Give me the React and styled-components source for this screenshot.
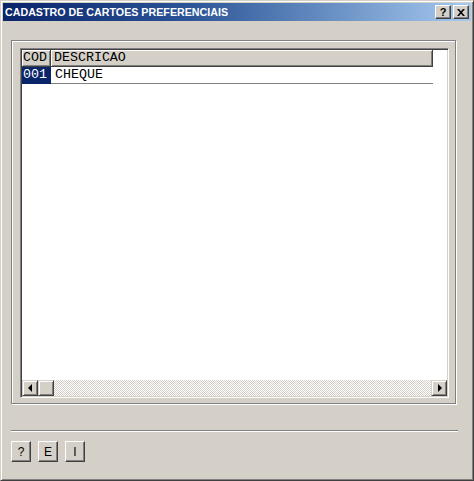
import React from 'react'
import styled, { createGlobalStyle } from 'styled-components'

const GlobalStyle = createGlobalStyle`
  html, body {
    margin: 0;
    padding: 0;
    background: #d4d0c8;
  }
  * {
    box-sizing: border-box;
  }
`

const App = () => {
  return (
    <>
      <GlobalStyle />
      <Window>
        <TitleBar>
          <Title>CADASTRO DE CARTOES PREFERENCIAIS</Title>
          <TitleButtons>
            <CaptionButton>?</CaptionButton>
            <CaptionButton>
              <svg width="8" height="7" viewBox="0 0 8 7">
                <path d="M0 0h2l2 2.2L6 0h2L5 3.5 8 7H6L4 4.8 2 7H0l3-3.5z" fill="#000" />
              </svg>
            </CaptionButton>
          </TitleButtons>
        </TitleBar>
        <Body>
          <GroupBox>
            <Grid>
              <GridRow>
                <HeaderCell width={29} pad={1}>COD</HeaderCell>
                <HeaderCell width={382} pad={3}>DESCRICAO</HeaderCell>
              </GridRow>
              <GridRow>
                <DataCell width={29} selected>001</DataCell>
                <DataCell width={382} lined>CHEQUE</DataCell>
              </GridRow>
              <GridFill />
              <ScrollBar>
                <ScrollButton>
                  <Arrow dir="left" />
                </ScrollButton>
                <ScrollButton />
                <ScrollTrack />
                <ScrollButton>
                  <Arrow dir="right" />
                </ScrollButton>
              </ScrollBar>
            </Grid>
          </GroupBox>
          <Separator />
          <ButtonRow>
            <ToolButton>?</ToolButton>
            <ToolButton>E</ToolButton>
            <ToolButton>I</ToolButton>
          </ButtonRow>
        </Body>
      </Window>
    </>
  )
}

const raised = `
  border-style: solid;
  border-width: 1px;
  border-color: #fff #404040 #404040 #fff;
  box-shadow: inset -1px -1px #808080;
`

const Window = styled.div`
  width: 474px;
  height: 481px;
  display: flex;
  flex-direction: column;
  background: #d4d0c8;
  border: 1px solid;
  border-color: #d4d0c8 #404040 #404040 #d4d0c8;
  box-shadow: inset 1px 1px #fff, inset -1px -1px #808080;
  padding: 2px;
`

const TitleBar = styled.div`
  height: 18px;
  display: flex;
  align-items: center;
  justify-content: space-between;
  padding: 0 2px 0 2px;
  background: linear-gradient(to right, #0a246a 0%, #2c5597 40%, #a6caf0 100%);
`

const Title = styled.span`
  font-family: 'Liberation Sans', Arial, sans-serif;
  font-weight: bold;
  font-size: 10.7px;
  color: #fff;
  white-space: nowrap;
`

const TitleButtons = styled.div`
  display: flex;
  gap: 2px;
`

const CaptionButton = styled.div`
  width: 16px;
  height: 14px;
  display: flex;
  align-items: center;
  justify-content: center;
  background: #d4d0c8;
  ${raised}
  font-family: 'Liberation Sans', Arial, sans-serif;
  font-weight: bold;
  font-size: 11px;
  color: #000;
`

const Body = styled.div`
  flex: 1;
  display: flex;
  flex-direction: column;
  padding: 19px 0 0 8px;
`

const GroupBox = styled.div`
  width: 445px;
  height: 364px;
  border: 1px solid #808080;
  box-shadow: inset 1px 1px #fff, 1px 1px #fff;
  padding: 7px 0 0 8px;
`

const Grid = styled.div`
  width: 429px;
  height: 350px;
  display: flex;
  flex-direction: column;
  background: #fff;
  border: 1px solid;
  border-color: #808080 #fff #fff #808080;
  box-shadow: inset 1px 1px #404040, inset -1px -1px #d4d0c8;
  padding: 1px;
`

const GridRow = styled.div`
  display: flex;
`

const HeaderCell = styled.div`
  width: ${p => p.width}px;
  height: 17px;
  line-height: 15px;
  padding-left: ${p => p.pad}px;
  background: #d4d0c8;
  border-right: 1px solid #404040;
  border-bottom: 1px solid #404040;
  box-shadow: inset 1px 1px #fff, inset -1px -1px #808080;
  font-family: 'Liberation Mono', 'Courier New', monospace;
  font-size: 13.3px;
  color: #000;
  white-space: nowrap;
`

const DataCell = styled.div`
  width: ${p => p.width}px;
  height: 17px;
  line-height: 16px;
  padding-left: ${p => (p.selected ? 1 : 4)}px;
  background: ${p => (p.selected ? '#0a246a' : '#fff')};
  color: ${p => (p.selected ? '#fff' : '#000')};
  border-bottom: 1px solid ${p => (p.lined ? '#808080' : 'transparent')};
  font-family: 'Liberation Mono', 'Courier New', monospace;
  font-size: 13.3px;
  white-space: nowrap;
`

const GridFill = styled.div`
  flex: 1;
`

const ScrollBar = styled.div`
  height: 16px;
  display: flex;
`

const ScrollButton = styled.div`
  width: 16px;
  height: 16px;
  display: flex;
  align-items: center;
  justify-content: center;
  background: #d4d0c8;
  border-style: solid;
  border-width: 1px;
  border-color: #d4d0c8 #404040 #404040 #d4d0c8;
  box-shadow: inset 1px 1px #fff, inset -1px -1px #808080;
`

const Arrow = styled.span`
  width: 0;
  height: 0;
  border-top: 4px solid transparent;
  border-bottom: 4px solid transparent;
  ${p =>
    p.dir === 'left'
      ? 'border-right: 4px solid #000; margin-left: -1px;'
      : 'border-left: 4px solid #000; margin-left: 1px;'}
`

const ScrollTrack = styled.div`
  flex: 1;
  background-image: conic-gradient(#fff 25%, #d4d0c8 0 50%, #fff 0 75%, #d4d0c8 0);
  background-size: 2px 2px;
`

const Separator = styled.div`
  width: 447px;
  height: 2px;
  margin-top: 26px;
  border-top: 1px solid #808080;
  border-bottom: 1px solid #fff;
`

const ButtonRow = styled.div`
  display: flex;
  gap: 7px;
  margin-top: 9px;
`

const ToolButton = styled.div`
  width: 20px;
  height: 21px;
  display: flex;
  align-items: center;
  justify-content: center;
  background: #d4d0c8;
  ${raised}
  font-family: 'Liberation Sans', Arial, sans-serif;
  font-size: 12px;
  color: #000;
`

export default App
